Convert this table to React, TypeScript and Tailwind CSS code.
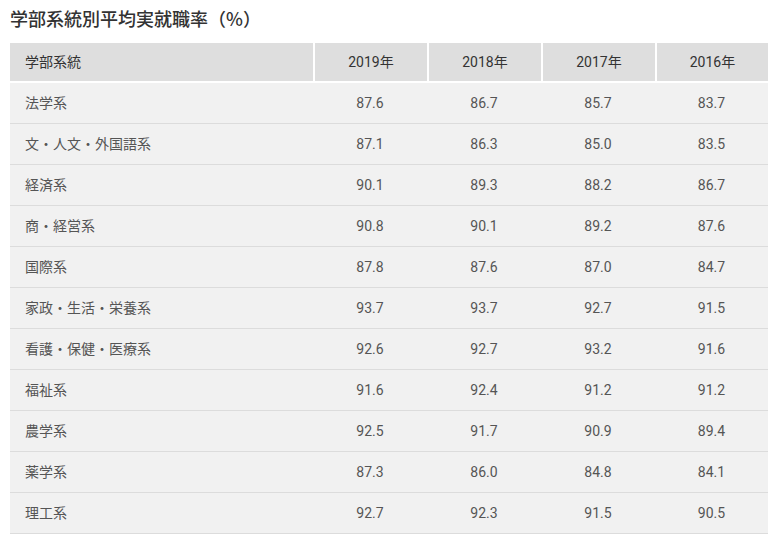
import React from "react";

const years = ["2019年", "2018年", "2017年", "2016年"];

const rows: [string, string[]][] = [
  ["法学系", ["87.6", "86.7", "85.7", "83.7"]],
  ["文・人文・外国語系", ["87.1", "86.3", "85.0", "83.5"]],
  ["経済系", ["90.1", "89.3", "88.2", "86.7"]],
  ["商・経営系", ["90.8", "90.1", "89.2", "87.6"]],
  ["国際系", ["87.8", "87.6", "87.0", "84.7"]],
  ["家政・生活・栄養系", ["93.7", "93.7", "92.7", "91.5"]],
  ["看護・保健・医療系", ["92.6", "92.7", "93.2", "91.6"]],
  ["福祉系", ["91.6", "92.4", "91.2", "91.2"]],
  ["農学系", ["92.5", "91.7", "90.9", "89.4"]],
  ["薬学系", ["87.3", "86.0", "84.8", "84.1"]],
  ["理工系", ["92.7", "92.3", "91.5", "90.5"]],
];

export default function App() {
  return (
    <div className="bg-white min-h-[543px] font-['Roboto','Noto_Sans_CJK_JP',sans-serif]">
      <h2 className="pl-[10px] pt-[4px] text-[18px] leading-[28px] font-medium text-[#333] font-['Noto_Sans_CJK_JP',sans-serif]">
        学部系統別平均実就職率（%）
      </h2>
      <div className="ml-[10px] mt-[11px] w-[758px] text-[14px]">
        <div className="grid grid-cols-[303px_114px_114px_114px_113px] bg-[#dedede] text-[#333] h-[40px] border-b-2 border-white">
          <div className="flex items-center pl-[15px]">学部系統</div>
          {years.map((y) => (
            <div key={y} className="flex items-center justify-center border-l-2 border-white">
              {y}
            </div>
          ))}
        </div>
        {rows.map(([name, vals]) => (
          <div
            key={name}
            className="grid grid-cols-[303px_114px_114px_114px_113px] bg-[#f1f1f1] text-[#555] h-[41px] border-b border-[#dcdcdc]"
          >
            <div className="flex items-center pl-[15px]">{name}</div>
            {vals.map((v, i) => (
              <div key={i} className="flex items-center justify-center">
                {v}
              </div>
            ))}
          </div>
        ))}
      </div>
    </div>
  );
}
